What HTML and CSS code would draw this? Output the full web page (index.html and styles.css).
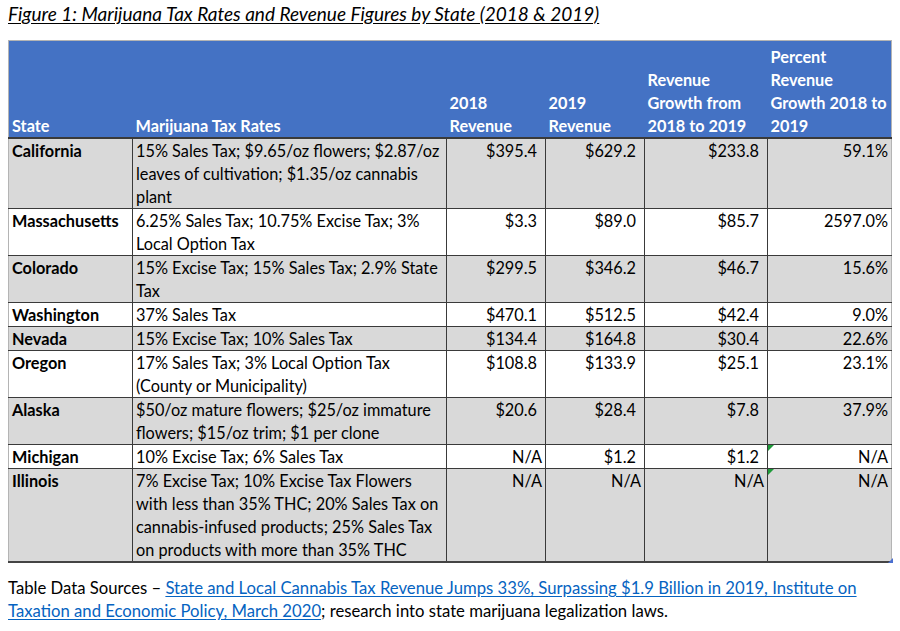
FILE: index.html
```html
<!DOCTYPE html>
<html>
<head>
<meta charset="utf-8">
<link rel="stylesheet" href="styles.css">
</head>
<body>
<div class="page">
  <p class="title">Figure 1: Marijuana Tax Rates and Revenue Figures by State (2018 &amp; 2019)</p>
  <table class="tbl">
    <colgroup>
      <col class="c1"><col class="c2"><col class="c3"><col class="c4"><col class="c5"><col class="c6">
    </colgroup>
    <thead>
      <tr>
        <th>State</th>
        <th>Marijuana Tax Rates</th>
        <th>2018<br>Revenue</th>
        <th>2019<br>Revenue</th>
        <th>Revenue<br>Growth from<br>2018 to 2019</th>
        <th>Percent<br>Revenue<br>Growth 2018 to<br>2019</th>
      </tr>
    </thead>
    <tbody>
      <tr class="gray">
        <td class="st">California</td>
        <td>15% Sales Tax; $9.65/oz flowers; $2.87/oz<br>leaves of cultivation; $1.35/oz cannabis<br>plant</td>
        <td class="m">$395.4</td><td class="m">$629.2</td><td class="m">$233.8</td><td class="p">59.1%</td>
      </tr>
      <tr>
        <td class="st">Massachusetts</td>
        <td>6.25% Sales Tax; 10.75% Excise Tax; 3%<br>Local Option Tax</td>
        <td class="m">$3.3</td><td class="m">$89.0</td><td class="m">$85.7</td><td class="p">2597.0%</td>
      </tr>
      <tr class="gray">
        <td class="st">Colorado</td>
        <td>15% Excise Tax; 15% Sales Tax; 2.9% State<br>Tax</td>
        <td class="m">$299.5</td><td class="m">$346.2</td><td class="m">$46.7</td><td class="p">15.6%</td>
      </tr>
      <tr>
        <td class="st">Washington</td>
        <td>37% Sales Tax</td>
        <td class="m">$470.1</td><td class="m">$512.5</td><td class="m">$42.4</td><td class="p">9.0%</td>
      </tr>
      <tr class="gray">
        <td class="st">Nevada</td>
        <td>15% Excise Tax; 10% Sales Tax</td>
        <td class="m">$134.4</td><td class="m">$164.8</td><td class="m">$30.4</td><td class="p">22.6%</td>
      </tr>
      <tr>
        <td class="st">Oregon</td>
        <td>17% Sales Tax; 3% Local Option Tax<br>(County or Municipality)</td>
        <td class="m">$108.8</td><td class="m">$133.9</td><td class="m">$25.1</td><td class="p">23.1%</td>
      </tr>
      <tr class="gray">
        <td class="st">Alaska</td>
        <td>$50/oz mature flowers; $25/oz immature<br>flowers; $15/oz trim; $1 per clone</td>
        <td class="m">$20.6</td><td class="m">$28.4</td><td class="m">$7.8</td><td class="p">37.9%</td>
      </tr>
      <tr>
        <td class="st">Michigan</td>
        <td>10% Excise Tax; 6% Sales Tax</td>
        <td class="p">N/A</td><td class="m">$1.2</td><td class="m">$1.2</td><td class="p flag">N/A</td>
      </tr>
      <tr class="gray last">
        <td class="st">Illinois</td>
        <td>7% Excise Tax; 10% Excise Tax Flowers<br>with less than 35% THC; 20% Sales Tax on<br>cannabis-infused products; 25% Sales Tax<br>on products with more than 35% THC</td>
        <td class="p">N/A</td><td class="p">N/A</td><td class="p">N/A</td><td class="p flag handle">N/A</td>
      </tr>
    </tbody>
  </table>
  <p class="sources">Table Data Sources – <a href="#" class="lnk">State and Local Cannabis Tax Revenue Jumps 33%, Surpassing $1.9 Billion in 2019, Institute on <br>Taxation and Economic Policy, March 2020</a>; research into state marijuana legalization laws.</p>
</div>
</body>
</html>
```

FILE: styles.css
```css
html, body {
  margin: 0;
  padding: 0;
  background: #ffffff;
}

.page {
  padding: 3px 0 0 8px;
  font-family: Lato, "Open Sans", "Liberation Sans", sans-serif;
  color: #000;
}

.title {
  margin: 0;
  font-size: 19px;
  line-height: 22px;
  font-style: italic;
  text-decoration: underline;
  text-underline-offset: 2px;
}

.tbl {
  margin-top: 15px;
  border-collapse: collapse;
  table-layout: fixed;
  width: 883px;
  font-size: 16.3px;
  line-height: 23px;
  border-top: 1px solid #b4b4b4;
  border-left: 1px solid #b4b4b4;
  border-right: 1px solid #b4b4b4;
  border-bottom: 2px solid #444;
}

.c1 { width: 124px; }
.c2 { width: 314px; }
.c3 { width: 99px; }
.c4 { width: 99px; }
.c5 { width: 123px; }
.c6 { width: 124px; }

.tbl thead th {
  background: #4472c4;
  color: #ffffff;
  font-weight: 700;
  text-align: left;
  vertical-align: bottom;
  padding: 4px 3px 0 3px;
  white-space: nowrap;
  border-bottom: 2px solid #3a3a3a;
}

.tbl td {
  padding: 0 3px;
  vertical-align: top;
  white-space: nowrap;
  border-left: 1px solid #3a3a3a;
  border-bottom: 1px solid #3a3a3a;
  background: #ffffff;
}

.tbl td:first-child {
  border-left: none;
}

.tbl tr.gray td {
  background: #d9d9d9;
}

.tbl td.st {
  font-weight: 700;
}

.tbl td.m {
  text-align: right;
  padding-right: 8px;
}

.tbl td.p {
  text-align: right;
  padding-right: 3px;
}

.tbl td.flag {
  position: relative;
}

.tbl td.flag::before {
  content: "";
  position: absolute;
  left: 0;
  top: 0;
  width: 0;
  height: 0;
  border-top: 6px solid #1e9b3a;
  border-right: 6px solid transparent;
}

.tbl td.handle::after {
  content: "";
  position: absolute;
  right: -2px;
  bottom: -2px;
  width: 0;
  height: 0;
  border-bottom: 5px solid #4a6fd0;
  border-left: 5px solid transparent;
}

.sources {
  margin: 14px 0 0 0;
  font-size: 16.7px;
  line-height: 23px;
}

.lnk {
  color: #0563c1;
  text-decoration: underline;
  text-underline-offset: 2px;
}
```
